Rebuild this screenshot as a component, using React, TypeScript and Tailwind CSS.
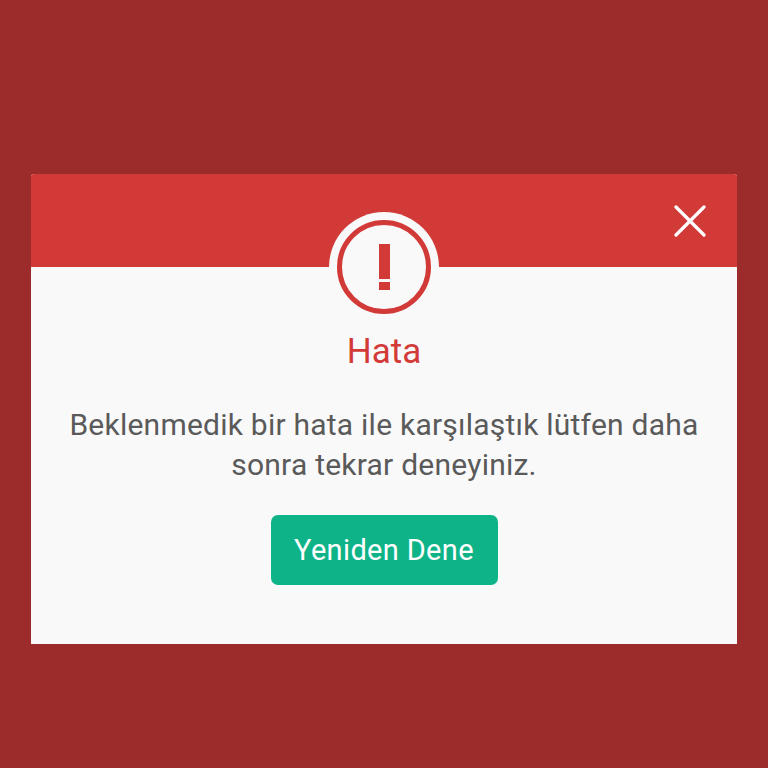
import React from "react";

export default function App() {
  return (
    <div className="w-[768px] h-[768px] bg-[#9c2b2b] flex flex-col pt-[174px] px-[31px]" style={{ fontFamily: "Roboto, sans-serif" }}>
      <div className="w-[706px] h-[470px] bg-[#f9f9f9] rounded-t-[3px] overflow-hidden flex flex-col items-center relative">
        <div className="w-full h-[93px] bg-[#d23a38] shrink-0" />
        <svg className="absolute right-[31px] top-[31px]" width="32" height="32" viewBox="0 0 32 32" fill="none" stroke="#fff" strokeWidth="3.2" strokeLinecap="round">
          <path d="M2 2 L30 30 M30 2 L2 30" />
        </svg>
        <div className="absolute top-[38px] left-[298px] w-[110px] h-[110px] rounded-full bg-[#f9f9f9] flex items-center justify-center">
          <div className="w-[94px] h-[94px] rounded-full border-[5px] border-[#d23a38] flex flex-col items-center justify-center gap-[3px]">
            <div className="w-[11px] h-[35px] bg-[#d23a38]" />
            <div className="w-[11px] h-[8px] bg-[#d23a38]" />
          </div>
        </div>
        <div className="mt-[62px] text-[35px] leading-[46px] text-[#d23a38]">Hata</div>
        <div className="mt-[30px] text-[30px] leading-[40px] tracking-[0.23px] text-[#5a5a5a] text-center">
          Beklenmedik bir hata ile karşılaştık lütfen daha
          <br />
          sonra tekrar deneyiniz.
        </div>
        <button className="mt-[30px] w-[227px] h-[70px] rounded-[7px] bg-[#0fb388] text-white text-[29px] tracking-[0.35px] flex items-center justify-center pt-[2px]">
          Yeniden Dene
        </button>
      </div>
    </div>
  );
}
